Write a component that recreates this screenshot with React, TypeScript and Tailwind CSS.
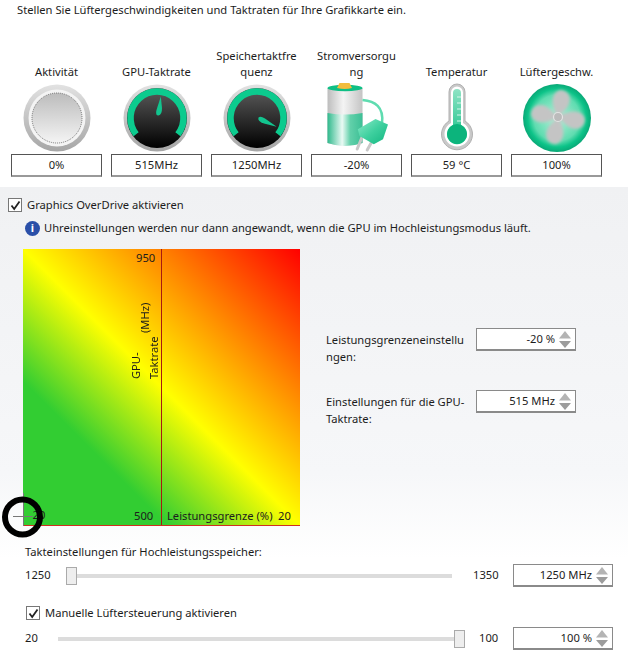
function Ring({ id }: { id: string }) {
  return (
    <>
      <defs>
        <linearGradient id={id} x1="0" y1="0" x2="0" y2="1">
          <stop offset="0" stopColor="#e2e2e2" />
          <stop offset="0.5" stopColor="#c4c4c4" />
          <stop offset="1" stopColor="#a6a6a6" />
        </linearGradient>
      </defs>
      <circle cx="34" cy="34" r="33.5" fill={`url(#${id})`} />
    </>
  );
}

function ActivityGauge() {
  return (
    <svg width="68" height="68" viewBox="0 0 68 68">
      <Ring id="ringA" />
      <defs>
        <linearGradient id="faceA" x1="0" y1="0" x2="0" y2="1">
          <stop offset="0" stopColor="#bcbcbc" />
          <stop offset="1" stopColor="#f4f4f4" />
        </linearGradient>
      </defs>
      <circle cx="34" cy="34" r="28.5" fill="#f4f4f4" />
      <circle cx="34" cy="34" r="25" fill="url(#faceA)" stroke="#555" strokeWidth="0.8" strokeDasharray="1 1" />
    </svg>
  );
}

function SpeedGauge({ id, needle }: { id: string; needle: string }) {
  return (
    <svg width="68" height="68" viewBox="0 0 68 68">
      <Ring id={`ring${id}`} />
      <defs>
        <linearGradient id={`face${id}`} x1="0" y1="0" x2="0" y2="1">
          <stop offset="0" stopColor="#5c5c5c" />
          <stop offset="0.55" stopColor="#2a2a2a" />
          <stop offset="1" stopColor="#000" />
        </linearGradient>
      </defs>
      <circle cx="34" cy="34" r="30" fill={`url(#face${id})`} />
      <path d="M13.1 50.3A26.5 26.5 0 1 1 54.9 50.3" fill="none" stroke="#0ccb8e" strokeWidth="6.5" />
      <path d={needle} fill="#12c48e" />
    </svg>
  );
}

function Battery() {
  return (
    <svg width="68" height="70" viewBox="0 0 68 70">
      <defs>
        <linearGradient id="batTop" x1="0" y1="0" x2="1" y2="0">
          <stop offset="0" stopColor="#bdbdbd" />
          <stop offset="0.45" stopColor="#f4f4f4" />
          <stop offset="1" stopColor="#c4c4c4" />
        </linearGradient>
        <linearGradient id="batLow" x1="0" y1="0" x2="1" y2="0">
          <stop offset="0" stopColor="#2fb98c" />
          <stop offset="0.42" stopColor="#eafaf4" />
          <stop offset="0.65" stopColor="#62d0aa" />
          <stop offset="1" stopColor="#3cbf95" />
        </linearGradient>
        <linearGradient id="plug" x1="0" y1="0" x2="1" y2="1">
          <stop offset="0" stopColor="#8ceac8" />
          <stop offset="0.5" stopColor="#3fd09f" />
          <stop offset="1" stopColor="#12b680" />
        </linearGradient>
      </defs>
      <path d="M4.5 5V60Q22 66 39.5 60V5Z" fill="url(#batTop)" />
      <path d="M4.5 30Q22 33 39.5 30V60Q22 66 4.5 60Z" fill="url(#batLow)" />
      <ellipse cx="22" cy="5" rx="17.5" ry="3.2" fill="#0fbf85" />
      <path d="M14 5 16.5 0H26.5L29 5Q22 7 14 5Z" fill="#f2bd3e" />
      <path d="M39.5 17C52 18 61 24 59 40" fill="none" stroke="#5fdcb0" strokeWidth="2.5" />
      <path d="M39.2 53.7 34.200 66M50.800 55.300 44.200 67" stroke="#c8c8c8" strokeWidth="3" strokeLinecap="round" />
      <path d="M34.8 46.3 52.5 36 65 41.500 60 56.300 50.800 61.300 36.500 53Z" fill="url(#plug)" />
    </svg>
  );
}

function Thermometer() {
  return (
    <svg width="32" height="70" viewBox="0 0 32 70">
      <defs>
        <linearGradient id="tube" x1="0" y1="0" x2="0" y2="1">
          <stop offset="0" stopColor="#8fe3c4" />
          <stop offset="1" stopColor="#0fbf85" />
        </linearGradient>
      </defs>
      <path d="M8 9a8 8 0 0 1 16 0V38a15.5 15.5 0 1 1-16 0Z" fill="#c9c9c9" stroke="#b0b0b0" />
      <path d="M10 9.5a6 6 0 0 1 12 0V40a12.5 12.5 0 1 1-12 0Z" fill="#fff" />
      <path d="M12 10a4 4 0 0 1 8 0V42a10 10 0 1 1-8 0Z" fill="url(#tube)" />
      <circle cx="16" cy="51" r="10" fill="#0cb47c" />
      <path d="M16 14h4M16 20h4M16 26h4M16 32h4M16 38h4" stroke="#d8f5ea" strokeWidth="1" />
    </svg>
  );
}

function Fan() {
  return (
    <svg width="68" height="68" viewBox="0 0 68 68">
      <defs>
        <radialGradient id="fanBg" cx="0.5" cy="0.5" r="0.5">
          <stop offset="0" stopColor="#b8f0da" />
          <stop offset="0.68" stopColor="#5fdcb0" />
          <stop offset="0.86" stopColor="#0cc388" />
          <stop offset="1" stopColor="#0aa877" />
        </radialGradient>
        <filter id="soft" x="-20%" y="-20%" width="140%" height="140%">
          <feGaussianBlur stdDeviation="1.8" />
        </filter>
      </defs>
      <circle cx="34" cy="34" r="34" fill="url(#fanBg)" />
      <g fill="#c4c4c4" filter="url(#soft)">
        <path d="M35 33C28 22 27 9 37 6 47 6 49 16 45 22 42 27 38 29 35 33Z" />
        <path d="M35 33C46 26 59 25 62 35 62 45 52 47 46 43 41 40 39 36 35 33Z" />
        <path d="M35 33C42 44 43 57 33 60 23 60 21 50 25 44 28 39 32 37 35 33Z" />
        <path d="M35 33C24 40 11 41 8 31 8 21 18 19 24 23 29 26 31 30 35 33Z" />
      </g>
      <circle cx="35" cy="33" r="4.5" fill="#bbb" stroke="#e4e4e4" strokeWidth="1.2" />
    </svg>
  );
}

function Tile({ label, value, children }: { label: React.ReactNode; value: string; children: React.ReactNode }) {
  return (
    <div className="flex w-[91px] flex-col items-center justify-end">
      <div className="text-center leading-[16px]">{label}</div>
      <div className="mt-[3px] flex h-[70px] items-center justify-center">{children}</div>
      <div className="mt-[1px] h-[23px] w-full border border-[#555] border-b-2 border-b-[#999] text-center leading-[20px]">{value}</div>
    </div>
  );
}

function Checkbox() {
  return (
    <span className="flex h-[14px] w-[14px] shrink-0 items-center justify-center border border-[#777] bg-white">
      <svg width="11" height="11" viewBox="0 0 11 11">
        <path d="M1.5 5.5 4.2 9 9.5 1.5" fill="none" stroke="#222" strokeWidth="1.8" />
      </svg>
    </span>
  );
}

function Spinner({ value }: { value: string }) {
  return (
    <div className="flex h-[23px] w-[100px] shrink-0 items-center justify-end border border-[#8a8a8a] border-b-2 bg-white pr-[4px]">
      <span className="leading-none">{value}</span>
      <svg className="ml-[4px]" width="12" height="17" viewBox="0 0 12 17">
        <path d="M6 0 12 7.5H0Z" fill="#b4b4b4" />
        <path d="M0 10H12L6 17Z" fill="#9c9c9c" />
      </svg>
    </div>
  );
}

function Slider({ from, to, left, value }: { from: string; to: string; left: boolean; value: string }) {
  return (
    <div className="flex items-center">
      <span className={left ? "w-[41px]" : "w-[33px]"}>{from}</span>
      <div className={`relative flex items-center ${left ? "w-[386px] justify-start" : "w-[407px] justify-end"}`}>
        <span className={left ? "h-[18px] w-[11px] shrink-0 border border-[#aaa] bg-[#eee]" : "order-2 h-[18px] w-[11px] shrink-0 border border-[#aaa] bg-[#eee]"} />
        <span className="h-[4px] flex-1 bg-[#dcdcdc]" />
      </div>
      <span className={left ? "ml-[21px] w-[40px]" : "ml-[14px] w-[34px]"}>{to}</span>
      <Spinner value={value} />
    </div>
  );
}

export default function App() {
  return (
    <main className="h-[664px] w-[628px] overflow-hidden bg-white font-['Noto_Sans',sans-serif] text-[11.2px] text-[#1c1c1c]">
      <p className="pl-[17px] pt-[1px] leading-[18px]">
        Stellen Sie Lüftergeschwindigkeiten und Taktraten für Ihre Grafikkarte ein.
      </p>

      {/* Anzeigen */}
      <div className="flex h-[168px] items-end gap-[9px] pb-[10px] pl-[11px]">
        <Tile label="Aktivität" value="0%"><ActivityGauge /></Tile>
        <Tile label="GPU-Taktrate" value="515MHz">
          <SpeedGauge id="Gpu" needle="M37.8 12.5 39 24Q39 31 35.5 31.5 32 31.5 33.5 26Z" />
        </Tile>
        <Tile label={<>Speichertaktfre<br />quenz</>} value="1250MHz">
          <SpeedGauge id="Mem" needle="M53.7 42.8 41 39.5Q34 37 35.5 33.5 37.5 31.5 42 34.5Z" />
        </Tile>
        <Tile label={<>Stromversorgu<br />ng</>} value="-20%"><Battery /></Tile>
        <Tile label="Temperatur" value="59 °C"><Thermometer /></Tile>
        <Tile label="Lüftergeschw." value="100%"><Fan /></Tile>
      </div>

      {/* Einstellungen */}
      <section className="h-[477px] bg-[linear-gradient(to_bottom,#f0f1f3,#f6f7f9_60%,#ffffff_78%)] pt-[9px]">
        <label className="flex items-center gap-[5px] pl-[8px] leading-[18px]">
          <Checkbox />
          Graphics OverDrive aktivieren
        </label>

        <div className="mt-[5px] flex items-center gap-[4px] pl-[25px] leading-[18px]">
          <span className="flex h-[15px] w-[15px] items-center justify-center rounded-full bg-[#2a4fa8] text-[11px] font-bold text-white">i</span>
          Uhreinstellungen werden nur dann angewandt, wenn die GPU im Hochleistungsmodus läuft.
        </div>

        <div className="mt-[12px] flex pl-[23px]">
          <div className="relative h-[277px] w-[277px] shrink-0 border-b border-b-[#d03020] bg-[linear-gradient(to_top_right,#32cd32_26%,#ffff00_50%,#ff0000_100%)]">
            <span className="absolute bottom-0 left-[138px] top-0 w-px bg-[#a81a10]" />
            <span className="absolute left-[113px] top-0 leading-[17px]">950</span>
            <span className="absolute bottom-[1px] left-[111px] leading-[17px]">500</span>
            <span className="absolute bottom-[2px] left-[6px] leading-[17px]">-20</span>
            <span className="absolute bottom-[1px] left-[144px] leading-[17px]">Leistungsgrenze (%)</span>
            <span className="absolute bottom-[1px] left-[255px] leading-[17px]">20</span>
            <div className="absolute left-[104px] top-[54px] flex rotate-180 items-center gap-[3px] leading-[18px] [writing-mode:vertical-rl]">
              <span>GPU-<br />Taktrate</span>
              <span>(MHz)</span>
            </div>
            <svg className="absolute left-[-23px] top-[244px]" width="46" height="46" viewBox="0 0 46 46">
              <path d="M13 23.5H33M23.5 0V33" stroke="#777" strokeWidth="1" />
              <circle cx="22.5" cy="24" r="17.5" fill="none" stroke="#000" strokeWidth="6" />
            </svg>
          </div>

          <div className="ml-[26px] mt-[79px] flex flex-col gap-[25px]">
            <div className="flex items-start">
              <span className="mt-[3px] w-[150px] leading-[17px]">Leistungsgrenzeneinstellu<br />ngen:</span>
              <Spinner value="-20 %" />
            </div>
            <div className="flex items-start">
              <span className="mt-[3px] w-[150px] leading-[17px]">Einstellungen für die GPU-<br />Taktrate:</span>
              <Spinner value="515 MHz" />
            </div>
          </div>
        </div>

        <p className="mt-[17px] pl-[25px] leading-[18px]">Takteinstellungen für Hochleistungsspeicher:</p>
        <div className="mt-[3px] pl-[25px]">
          <Slider from="1250" to="1350" left value="1250 MHz" />
        </div>
        <label className="mt-[17px] flex items-center gap-[5px] pl-[26px] leading-[18px]">
          <Checkbox />
          Manuelle Lüftersteuerung aktivieren
        </label>
        <div className="mt-[5px] pl-[25px]">
          <Slider from="20" to="100" left={false} value="100 %" />
        </div>
      </section>
    </main>
  );
}
